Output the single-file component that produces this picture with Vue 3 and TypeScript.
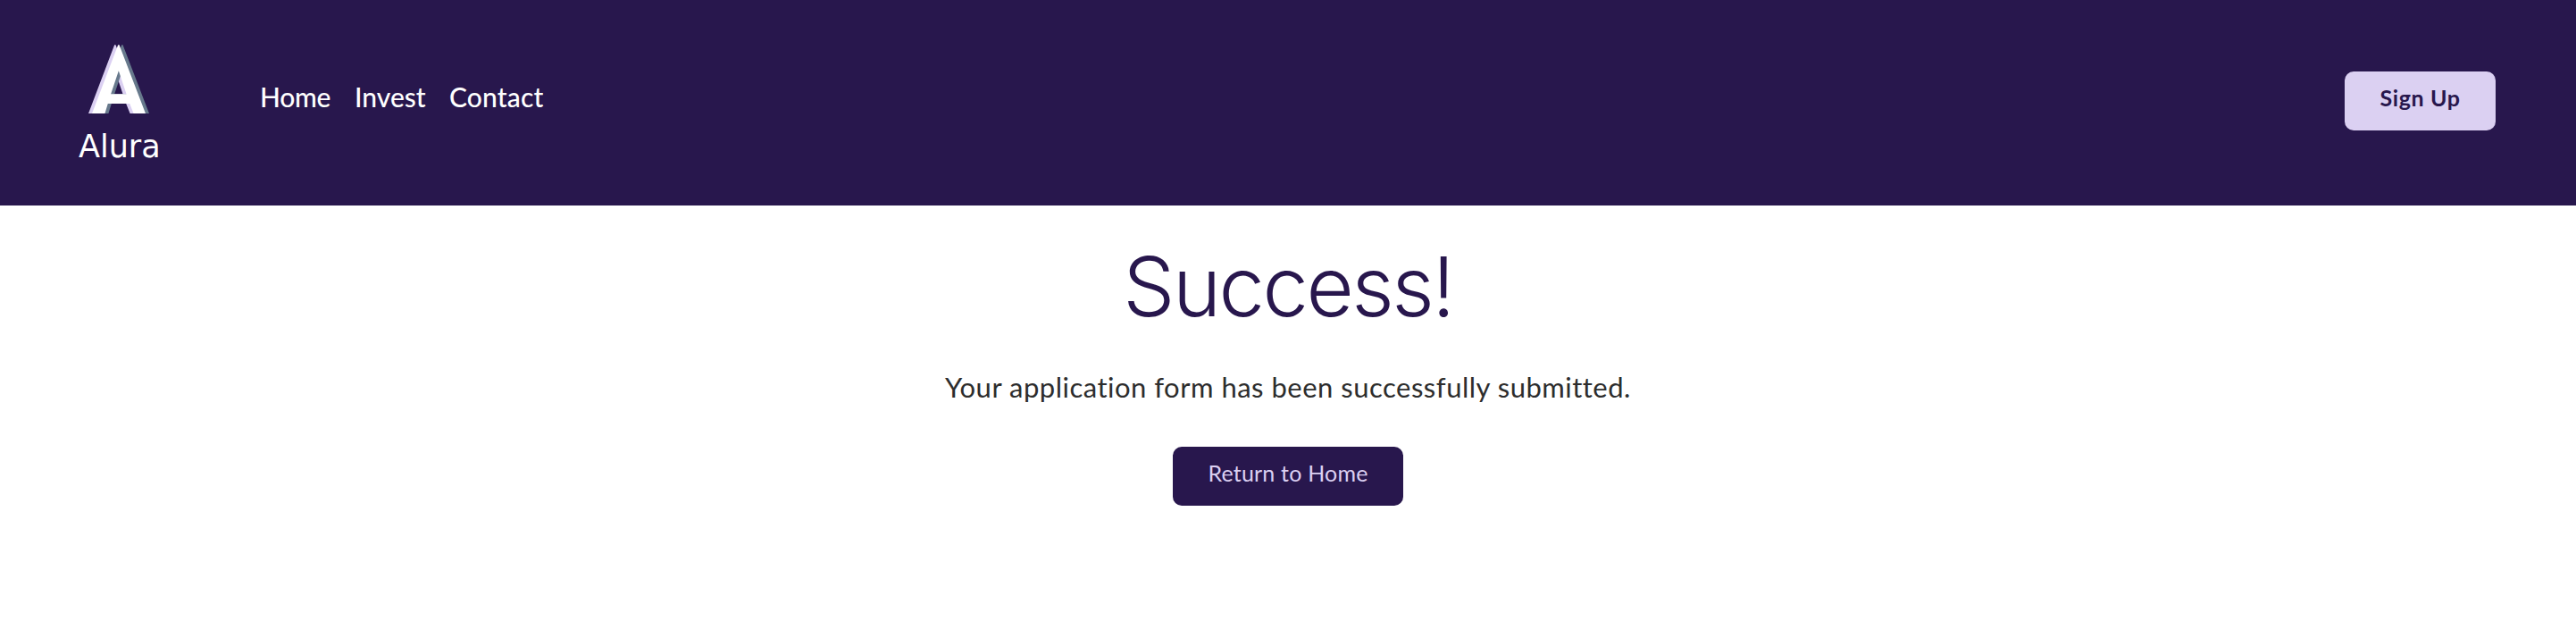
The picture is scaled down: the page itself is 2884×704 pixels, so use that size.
<script setup lang="ts">
interface NavLink {
  label: string
  cls: string
}

const links: NavLink[] = [
  { label: 'Home', cls: 'home' },
  { label: 'Invest', cls: 'invest' },
  { label: 'Contact', cls: 'contact' },
]

const letter =
  'M188 61 H192 L280 290 H240 L227 257 H154 L144 290 H101 Z M190 147 L164 225 H216 Z'
</script>

<template>
  <div class="page">
    <header class="header">
      <a class="brand">
        <svg class="mark" viewBox="89 60 203 230" aria-hidden="true">
          <path class="mark-left" fill-rule="evenodd" transform="translate(-12 0)" :d="letter" />
          <path class="mark-right" fill-rule="evenodd" transform="translate(12 0)" :d="letter" />
          <path class="mark-front" fill-rule="evenodd" :d="letter" />
        </svg>
        <span class="brand-name">Alura</span>
      </a>
      <nav class="nav">
        <a v-for="link in links" :key="link.label" :class="link.cls">{{ link.label }}</a>
      </nav>
      <button class="button signup">Sign Up</button>
    </header>
    <main class="main">
      <h1 class="title">Success!</h1>
      <p class="message">Your application form has been successfully submitted.</p>
      <button class="button return">Return to Home</button>
    </main>
  </div>
</template>

<style>
body {
  margin: 0;
  background: #fff;
}
</style>

<style scoped>
.page {
  min-height: 704px;
  font-family: Lato, 'Noto Sans', sans-serif;
  font-variant-ligatures: none;
}
.header {
  box-sizing: border-box;
  height: 230px;
  background: #28174d;
  display: flex;
  align-items: flex-start;
  padding: 0 90px 0 88px;
}
.brand {
  width: 91px;
  display: flex;
  flex-direction: column;
  align-items: flex-start;
  padding-top: 50px;
  color: #fff;
}
.mark {
  width: 68px;
  height: 77px;
  margin-left: 11px;
}
.mark-left {
  fill: #dbd0f2;
}
.mark-right {
  fill: #67798c;
}
.mark-front {
  fill: #fff;
}
.brand-name {
  font-family: 'DejaVu Sans', sans-serif;
  font-size: 35px;
  line-height: 40px;
  margin-top: 17px;
  white-space: nowrap;
}
.nav {
  display: flex;
  margin-left: 112px;
  padding-top: 88px;
  color: #fff;
  font-size: 30px;
  font-weight: 500;
  line-height: 40px;
}
.nav a {
  white-space: nowrap;
}
.home {
  width: 106px;
  letter-spacing: -0.3px;
}
.invest {
  width: 106px;
}
.contact {
  letter-spacing: 0.15px;
}
.button {
  box-sizing: border-box;
  height: 66px;
  border: 0;
  border-radius: 10px;
  padding: 0 0 9px;
  font-family: inherit;
  font-size: 25px;
  line-height: 34px;
  letter-spacing: 0.2px;
  white-space: nowrap;
}
.signup {
  width: 169px;
  margin: 80px 0 0 auto;
  background: #dbd0f2;
  color: #28174d;
  font-weight: 700;
  letter-spacing: 0.6px;
}
.main {
  display: flex;
  flex-direction: column;
  align-items: center;
}
.title {
  margin: 27px 0 0;
  color: #28174d;
  font-family: Inter, sans-serif;
  font-size: 92px;
  font-weight: 320;
  line-height: 128px;
  letter-spacing: -2.5px;
}
.message {
  margin: 27px 0 0;
  color: #2d2d2d;
  font-size: 31px;
  line-height: 42px;
  letter-spacing: 0.5px;
  white-space: nowrap;
}
.return {
  width: 258px;
  margin-top: 46px;
  background: #28174d;
  color: #dbd0f2;
}
</style>
